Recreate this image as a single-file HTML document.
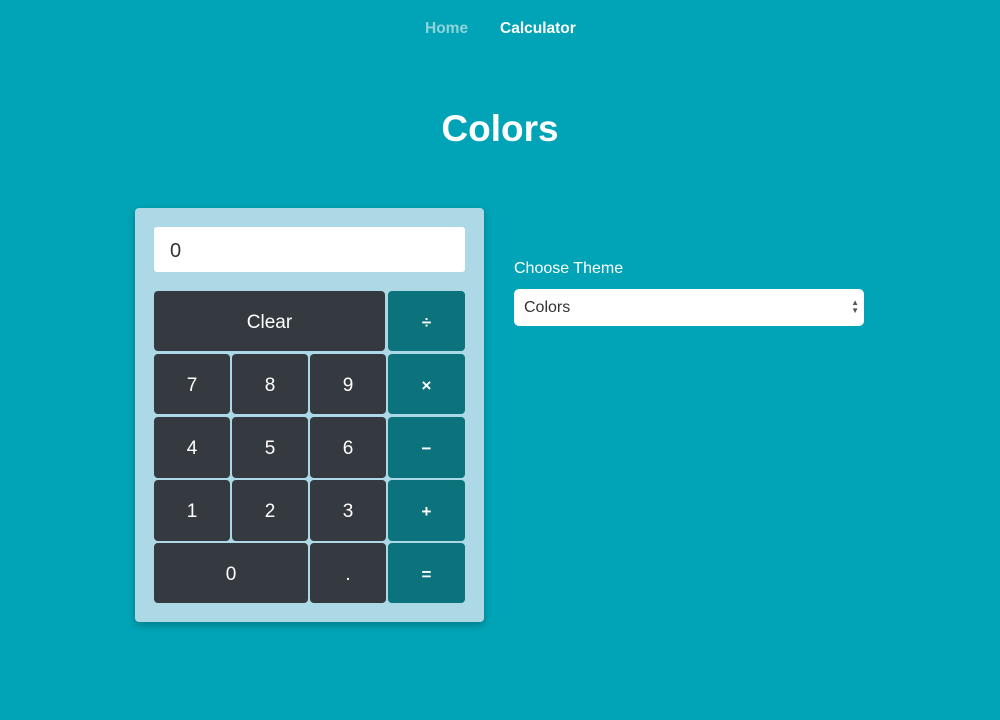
<!DOCTYPE html>
<html><head><meta charset="utf-8"><style>
body{margin:0;width:1000px;height:720px;background:#00a4b6;font-family:"Liberation Sans",Arial,sans-serif;position:relative;overflow:hidden}
.nav{position:absolute;top:20px;font-size:15.5px;font-weight:bold}
h1{position:absolute;top:106px;left:0;width:1000px;text-align:center;margin:0;font-size:37px;font-weight:bold;color:#fff;line-height:46px}
.panel{position:absolute;left:135px;top:208px;width:349px;height:414px;background:#add8e6;border-radius:4px;box-shadow:0 3px 8px rgba(0,0,0,.25)}
.disp{position:absolute;left:154px;top:227px;width:311px;height:45px;background:#fff;border-radius:3px;box-sizing:border-box;padding-left:16px;line-height:48px;font-size:20px;color:#333}
.b{position:absolute;background:#343a40;color:#fff;border-radius:4px;display:flex;align-items:center;justify-content:center;font-size:19px;padding-top:3px;box-sizing:border-box}
.o{background:#0c737c;font-size:17px;font-weight:bold}
label{position:absolute;left:514px;top:260px;color:#fff;font-size:16px}
.sel{position:absolute;left:514px;top:289px;width:350px;height:37px;background:#fff;border-radius:5px;box-sizing:border-box;padding-left:10px;line-height:37px;font-size:16px;color:#333}
.ar{position:absolute;right:5px;top:10px;font-size:8px;line-height:8px;color:#555}
</style></head><body>
<div class="nav" style="left:425px;color:#8fd3dc">Home</div>
<div class="nav" style="left:500px;color:#fff">Calculator</div>
<h1>Colors</h1>
<div class="panel"></div>
<div class="disp">0</div>
<div class="b" style="left:154px;top:291px;width:231px;height:60px">Clear</div>
<div class="b o" style="left:388px;top:291px;width:77px;height:60px">÷</div>
<div class="b" style="left:154px;top:354px;width:76px;height:60px">7</div>
<div class="b" style="left:232px;top:354px;width:76px;height:60px">8</div>
<div class="b" style="left:310px;top:354px;width:76px;height:60px">9</div>
<div class="b o" style="left:388px;top:354px;width:77px;height:60px">×</div>
<div class="b" style="left:154px;top:417px;width:76px;height:61px">4</div>
<div class="b" style="left:232px;top:417px;width:76px;height:61px">5</div>
<div class="b" style="left:310px;top:417px;width:76px;height:61px">6</div>
<div class="b o" style="left:388px;top:417px;width:77px;height:61px">−</div>
<div class="b" style="left:154px;top:480px;width:76px;height:61px">1</div>
<div class="b" style="left:232px;top:480px;width:76px;height:61px">2</div>
<div class="b" style="left:310px;top:480px;width:76px;height:61px">3</div>
<div class="b o" style="left:388px;top:480px;width:77px;height:61px">+</div>
<div class="b" style="left:154px;top:543px;width:154px;height:60px">0</div>
<div class="b" style="left:310px;top:543px;width:76px;height:60px">.</div>
<div class="b o" style="left:388px;top:543px;width:77px;height:60px">=</div>
<label>Choose Theme</label>
<div class="sel">Colors<div class="ar">▲<br>▼</div></div>
</body></html>
